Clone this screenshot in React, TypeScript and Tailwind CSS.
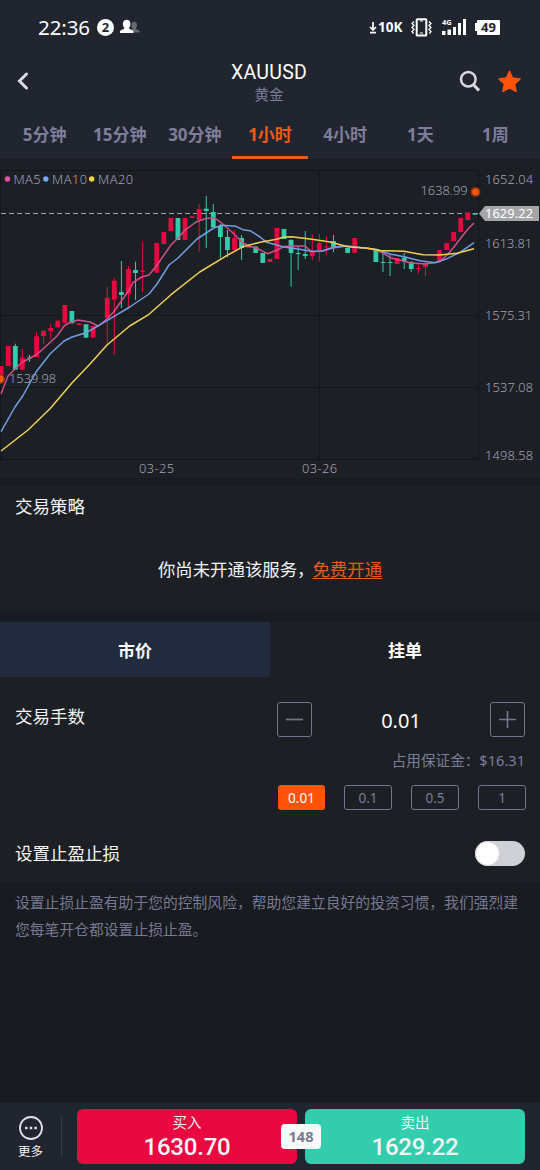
import React from "react";

type Candle = [index: number, color: "r" | "g", top: number, bottom: number, high?: number, low?: number];

const candles: Candle[] = [
  [0, "r", 366, 382], [1, "r", 346, 366], [2, "g", 346, 369.7, 343.7], [3, "r", 357.7, 369.7, 349],
  [4, "g", 357.5, 358.5, 355, 362], [5, "r", 336.3, 357, 332], [6, "r", 331, 336, 330, 344], [7, "r", 328, 331, 324, 339],
  [8, "r", 320.7, 327.3], [9, "r", 305, 323], [10, "g", 311, 323.3], [11, "r", 323.3, 325],
  [12, "g", 324.3, 337.7], [13, "r", 326, 337.7], [15, "r", 297.7, 318, 287, 345], [16, "r", 280.7, 299.7, 277.7, 355],
  [17, "g", 292, 295, 261, 308], [18, "r", 269, 294, 266, 307], [19, "g", 270, 273, 261.7, 300], [20, "r", 270.7, 271.7, 241.7, 292],
  [22, "r", 243, 272.7], [23, "r", 232, 244], [24, "r", 218, 231], [25, "g", 218, 240],
  [26, "r", 218, 240], [27, "r", 216.3, 218], [28, "r", 209, 220, 204, 251.7], [29, "g", 208.7, 211, 196, 248],
  [30, "g", 212, 227.5, 204], [31, "g", 226, 237, 224, 258], [32, "g", 237, 250, 230, 257.5], [33, "r", 238, 250, 230],
  [34, "g", 238, 248, 235, 260], [35, "r", 245.5, 248], [36, "g", 246.5, 253], [37, "g", 253, 263],
  [38, "r", 259, 262], [39, "r", 228, 259], [40, "g", 229, 239], [41, "g", 240, 253, 239, 286.7],
  [42, "g", 253, 254, 246, 270], [43, "g", 254, 256, 231, 259], [44, "r", 251.5, 256, 234, 260], [45, "r", 243, 250, 234, 261.5],
  [46, "r", 246.5, 247.5, 236, 255], [47, "g", 241, 247, 235, 252], [49, "g", 248, 253], [50, "r", 238, 253],
  [53, "g", 250, 262], [54, "g", 262, 263, 252, 272], [55, "g", 262, 263, 255, 276], [56, "r", 258, 264],
  [57, "g", 258, 261, 253, 269], [58, "g", 262, 269, 261, 272], [59, "r", 268, 269, 265, 274], [60, "r", 263, 267, 262, 276],
  [62, "r", 250, 261], [63, "r", 243, 250], [64, "r", 232, 241], [65, "r", 218, 232],
  [66, "r", 212.5, 220], [67, "g", 213.3, 214.7],
];

const ma5 = "1,394 8,376 15,369 22.5,362 36,355 43,349 57,336 64.5,325.5 70,322.5 78,320 90,322 98,326 107,319 114,311.5 129.5,289.5 133,282.5 141.7,277 149,275 156.7,265.5 171,245 178.5,237.5 185,230 196.7,221.7 206,218.5 213.6,217.7 220,221.7 231.7,231.7 243,243 250.7,246.5 256,248 267.7,253.7 277,250 284,246.5 291,246 305,246 311.7,251.7 323,251 333,248 347.7,246 370,248.7 376,250 383,253 390,257.5 397.7,259.7 411,263 425.7,264 439.7,261.7 447,255 454,247 461,237.7 468,229 474,223";
const ma10 = "1,431.7 15,407 22.7,396 36,372 50,354 64,341 72,337 86,332.7 98,326 107,320.7 129.7,307 149,294 157,284 169,265 178,258 197,239 213.7,228 221.7,225.3 236,226.3 243,229.7 250,230.7 260,237 266.7,242.3 284,247 298,249 311.7,251.3 321.7,251 333.7,247.3 343,246 355,247 376,249.3 390,254 404,256.7 420,260.7 435,262.7 447,258.7 460,252.3 474,242.7";
const ma20 = "1,451 28,430 50,408.7 71.7,383.3 90,364 107,345 129.7,326 149,314.3 171,294.7 199.7,272 226.7,255.7 243,246.7 260,242.3 276.7,239.3 284,237 291.7,236.7 312,239.3 330,242 347.7,246.7 368,248.3 380,250.5 404,251.3 423,254.7 440,255 457,253.3 474,248.7";

function Chart() {
  const up = "#e8083f";
  const down = "#33cbac";
  return (
    <svg width="540" height="319" viewBox="0 159 540 319" className="block bg-[#1c2025]" fontFamily="'Noto Sans', sans-serif" fontSize="12.8" fontWeight="300" fill="#a2a3ba">
      <path stroke="#121519" strokeWidth="1" d="M0 170.5H479M0 315.5H479M0 387.5H479M0 459.5H479M.5 170V460M319.5 170V460M478.5 170V460" />
      <path d="M1 213.5H480" stroke="#a2a6ad" strokeWidth="1" strokeDasharray="5 3" />
      {candles.map(([i, c, top, bottom, high = top, low = bottom]) => {
        const x = 1.2 + i * 7.07;
        const color = c === "r" ? up : down;
        return (
          <g key={i} fill={color}>
            <rect x={x - 0.5} y={high} width="1" height={low - high} />
            <rect x={x - 2.4} y={top} width="4.8" height={bottom - top} />
          </g>
        );
      })}
      <g fill="none" strokeWidth="1.5" strokeLinejoin="round">
        <polyline points={ma5} stroke="#cf4f8b" />
        <polyline points={ma10} stroke="#719de2" />
        <polyline points={ma20} stroke="#f0cf57" />
      </g>
      <circle cx="0" cy="379" r="5" fill="#8c3517" />
      <circle cx="0" cy="379" r="3.5" fill="#ff5708" />
      <circle cx="475.5" cy="192" r="5" fill="#8c3517" />
      <circle cx="475.5" cy="192" r="3.3" fill="#ff5708" />
      <circle cx="7.5" cy="179" r="2.7" fill="#e05594" />
      <circle cx="45.8" cy="179" r="2.7" fill="#76a6ef" />
      <circle cx="91.7" cy="179" r="2.7" fill="#fbd04c" />
      <text x="13.5" y="184" textLength="27">MA5</text>
      <text x="52" y="184" textLength="35">MA10</text>
      <text x="98" y="184" textLength="35">MA20</text>
      <text x="9" y="382.5" textLength="47">1539.98</text>
      <text x="420.5" y="195" textLength="47">1638.99</text>
      <text x="485" y="184" textLength="48">1652.04</text>
      <text x="485" y="247.5" textLength="47">1613.81</text>
      <text x="485" y="320" textLength="47">1575.31</text>
      <text x="485" y="392" textLength="48">1537.08</text>
      <text x="485" y="460" textLength="48">1498.58</text>
      <text x="139" y="473" textLength="35">03-25</text>
      <text x="302" y="473" textLength="35">03-26</text>
      <path d="M479 213.5L485 206H539V221H485Z" fill="#a4a6a8" />
      <text x="485" y="218" textLength="48" fill="#fff" fontWeight="400">1629.22</text>
    </svg>
  );
}

function StatusBar() {
  return (
    <div className="flex h-[54px] items-center justify-between pl-[38px] pr-10 text-white">
      <div className="flex items-center">
        <span className="w-[53px] text-[20.500px] leading-none tracking-[-0.100px]">22:36</span>
        <span className="ml-[6px] flex size-[17px] items-center justify-center rounded-full bg-white text-[13px] font-bold leading-none text-[#21252f]">2</span>
        <svg className="ml-[6px]" width="20" height="16" viewBox="0 0 20 16">
          <path fill="#646972" d="M11 13.500h8.500v-1.300c0-1.400-3.700-1.600-3.800-2.600 1.800-1.400 2.200-6.800-1.500-6.800-3.600 0-3.200 5.400-1.600 6.800z" />
          <path fill="#fff" d="M0 14v-1.500c0-1.700 4.300-2 4.400-3.500C2.200 6.900 2.100.700 6.700.700s4.500 6.200 2.300 8.300c.1 1.500 4.400 1.800 4.400 3.500V14z" />
        </svg>
      </div>
      <div className="flex items-center">
        <svg className="mt-px" width="8" height="13" viewBox="0 0 8 13" fill="none" stroke="#fff" strokeWidth="1.700">
          <path d="M4 1v8M1 6l3 3 3-3M1 11.700h6" />
        </svg>
        <span className="ml-px w-[26px] pt-px text-[13.500px] font-bold leading-none">10K</span>
        <svg className="ml-[7px]" width="21" height="19" viewBox="0 0 21 19" fill="none" stroke="#fff">
          <rect x="5.700" y="1.200" width="9.600" height="16.400" rx=".5" strokeWidth="2" />
          <path d="M9 15h3M9 3h3" />
          <path strokeWidth="1.300" d="M3 3.500 1 5.500l2 2-2 2 2 2-2 2 1.500 2M18 3.500l2 2-2 2 2 2-2 2 2 2-1.500 2" />
        </svg>
        <svg className="ml-[10px]" width="25" height="18" viewBox="0 0 25 18" fill="#fff">
          <path d="M0 13h3.500v4H0zM5.500 11.500H9V17H5.500zM11 9h3v8h-3zM16 5h3v12h-3zM21 1h3v16h-3z" />
          <text x="0" y="7" fontFamily="'Noto Sans', sans-serif" fontSize="7.500" fontWeight="700">4G</text>
        </svg>
        <span className="ml-[8px] h-[8px] w-[2px] bg-white" />
        <span className="flex h-[15px] w-[23px] items-center justify-center rounded-[1px] bg-white pt-px text-[13px] font-bold leading-none text-[#21252f]">49</span>
      </div>
    </div>
  );
}

const periods = ["5分钟", "15分钟", "30分钟", "1小时", "4小时", "1天", "1周"];
const lots = ["0.01", "0.1", "0.5", "1"];

export default function App() {
  return (
    <div className="flex h-[1170px] w-[540px] flex-col overflow-hidden bg-[#181b20] font-['Noto_Sans','Noto_Sans_CJK_SC',sans-serif] text-[#f3f4f6]">
      <header className="h-[159px] bg-[#21252f]">
        <StatusBar />
        <div className="flex h-[56px] items-center">
          <div className="w-[60px] pb-[3px] pl-[17px]">
            <svg width="12" height="18" viewBox="0 0 12 18" fill="none" stroke="#dcdee6" strokeWidth="3" strokeLinecap="round">
              <path d="M9.500 2 2.500 9l7 7" />
            </svg>
          </div>
          <div className="flex w-[418px] flex-col items-center pt-[2px]">
            <div className="font-['Roboto'] text-[19.500px] leading-[22px] tracking-[0.300px] text-white">XAUUSD</div>
            <div className="text-[14.500px] leading-[20px] text-[#7b7d99]">黄金</div>
          </div>
          <div className="-ml-[19px] flex items-center gap-[16px] pb-px">
            <svg width="22" height="23" viewBox="0 0 22 23" fill="none" stroke="#d8dae0">
              <circle cx="9.300" cy="9.300" r="7.300" strokeWidth="2.500" />
              <path d="m14.700 15 5.300 5.500" strokeWidth="3.200" />
            </svg>
            <svg width="25" height="25" viewBox="0 0 26 25" fill="#ff5308" stroke="#ff5308" strokeLinejoin="round" strokeWidth="1.500">
              <path d="m13 2 3.200 6.900 7.800 1-5.700 5.200 1.500 7.700L13 19l-6.800 3.800 1.500-7.700L2 9.900l7.800-1z" />
            </svg>
          </div>
        </div>
        <nav className="grid h-[49px] grid-cols-7 px-[7px]">
          {periods.map((p) => (
            <div key={p} className={`flex items-center justify-center border-b-[3px] pt-[4px] text-[17px] font-bold ${p === "1小时" ? "border-[#ee5a1a] text-[#ee5a1a]" : "border-transparent text-[#7d7e9a]"}`}>
              {p}
            </div>
          ))}
        </nav>
      </header>
      <Chart />

      <section className="mt-[8px] h-[126px] bg-[#1c2025]">
        <h2 className="flex h-[41px] items-center border-b border-[#1a1d22] pl-[15px] text-[17.500px]">交易策略</h2>
        <div className="flex h-[85px] items-center justify-center text-[17.400px]">
          <span className="-mr-[2px]">你尚未开通该服务，</span>
          <a className="text-[#e95a1f] underline decoration-1 underline-offset-[2px]">免费开通</a>
        </div>
      </section>

      <div className="mt-[10px] grid h-[55px] grid-cols-2 text-[17px] font-bold text-white">
        <div className="flex items-center justify-center bg-[#222b3e] pt-[2px]">市价</div>
        <div className="flex items-center justify-center bg-[#1c2025] pt-[2px]">挂单</div>
      </div>

      <section className="h-[205px] bg-[#1c2025] pl-[15px] pr-[15px]">
        <div className="flex h-[67px] items-start justify-between pt-[25px]">
          <h2 className="pt-px text-[17.500px] leading-[26px]">交易手数</h2>
          <div className="flex w-[248px] items-center justify-between">
            <button className="flex size-[35px] items-center justify-center rounded-[3px] border border-[#73758c]">
              <svg width="17" height="17" stroke="#73758c" strokeWidth="1.700"><path d="M0 8.500h17" /></svg>
            </button>
            <span className="pt-[3px] text-[20px] leading-none text-white">0.01</span>
            <button className="flex size-[35px] items-center justify-center rounded-[3px] border border-[#73758c]">
              <svg width="17" height="17" stroke="#73758c" strokeWidth="1.700"><path d="M0 8.500h17M8.500 0v17" /></svg>
            </button>
          </div>
        </div>
        <div className="mt-[5px] flex h-[22px] items-center justify-end text-[14.600px] leading-none text-[#7b7d99]">
          <span>占用保证金：</span>
          <span>$16.31</span>
        </div>
        <div className="-mr-px mt-[14px] flex justify-end gap-[19px]">
          {lots.map((l, i) => (
            <div key={l} className={`flex h-[25px] items-center justify-center rounded-[3px] pt-px text-[13.500px] ${i === 0 ? "w-[47px] bg-[#ff5308] text-white" : "w-[48px] border border-[#73758c] text-[#7b7d99]"}`}>
              {l}
            </div>
          ))}
        </div>
        <div className="mt-[27px] flex h-[32px] items-center justify-between">
          <h2 className="pt-px text-[17.500px]">设置止盈止损</h2>
          <div className="h-[25px] w-[50px] rounded-full bg-[#d0d1d6]">
            <div className="size-[25px] rounded-full border border-[#d0d1d6] bg-white" />
          </div>
        </div>
      </section>

      <p className="h-[220px] whitespace-nowrap pl-[15px] pt-[7px] text-[14.800px] leading-[27px] text-[#777994]">
        设置止损止盈有助于您的控制风险，帮助您建立良好的投资习惯，我们强烈建
        <br />
        您每笔开仓都设置止损止盈。
      </p>

      <footer className="flex h-[68px] bg-[#21252f] pt-[7px]">
        <div className="flex w-[61px] flex-col items-center">
          <svg className="mt-[6px]" width="26" height="26" viewBox="0 0 26 26">
            <circle cx="13" cy="13" r="11" fill="none" stroke="#dfe1e8" strokeWidth="1.800" />
            <path d="M7 11.700h2.500v2.500H7zM11.700 11.700h2.500v2.500h-2.500zM16.400 11.700h2.500v2.500h-2.500z" fill="#dfe1e8" />
          </svg>
          <span className="mt-[2px] text-[12.500px] leading-[18px]">更多</span>
        </div>
        <div className="mt-[8px] h-[40px] w-px bg-[#363b47]" />
        <div className="relative ml-[15px] flex gap-[8px]">
          <button className="flex h-[55px] w-[220px] flex-col items-center rounded-[6px] bg-[#ea0840] pt-[3px]">
            <span className="text-[14.500px] leading-[20px]">买入</span>
            <span className="font-['Roboto'] text-[24px] font-medium leading-[31px] tracking-[-0.200px]">1630.70</span>
          </button>
          <button className="flex h-[55px] w-[220px] flex-col items-center rounded-[6px] bg-[#33ccac] pt-[3px]">
            <span className="text-[14.500px] leading-[20px]">卖出</span>
            <span className="font-['Roboto'] text-[24px] font-medium leading-[31px] tracking-[-0.200px]">1629.22</span>
          </button>
          <div className="absolute left-[204px] top-[15px] flex h-[25px] w-[40px] items-center justify-center rounded-[4px] bg-[#f7f8fa] text-[14.500px] font-bold text-[#757c90]">148</div>
        </div>
      </footer>
    </div>
  );
}
